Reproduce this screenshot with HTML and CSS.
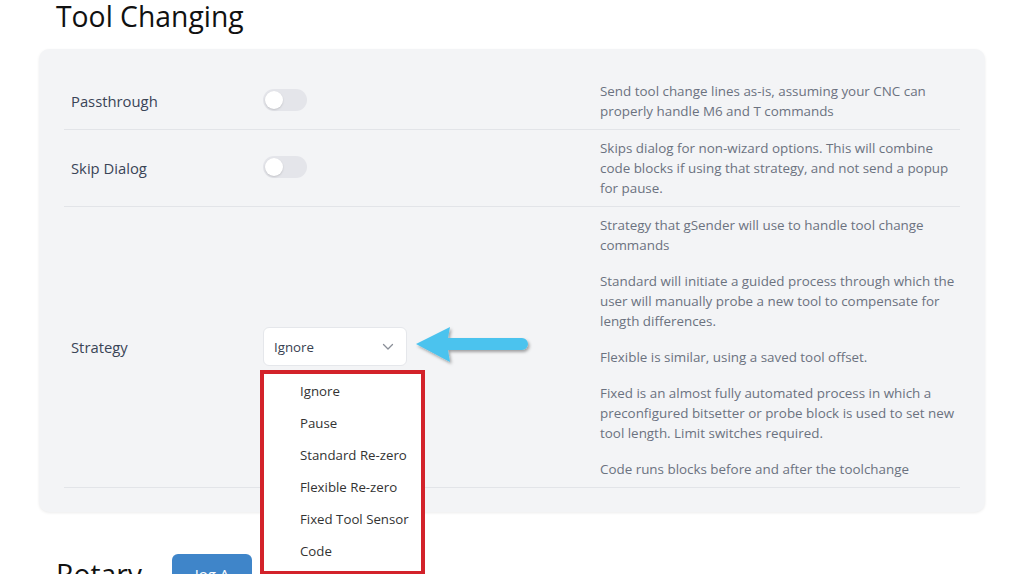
FILE: index.html
```html
<!DOCTYPE html>
<html>
<head>
<meta charset="utf-8">
<link rel="stylesheet" href="styles.css">
</head>
<body>
<main class="page">
  <h2 class="section-title top">Tool Changing</h2>
  <section class="card">
    <div class="row">
      <div class="label">Passthrough</div>
      <div class="control"><span class="toggle"><span class="knob"></span></span></div>
      <div class="desc"><p>Send tool change lines as-is, assuming your CNC can properly handle M6 and T commands</p></div>
    </div>
    <div class="row">
      <div class="label">Skip Dialog</div>
      <div class="control"><span class="toggle"><span class="knob"></span></span></div>
      <div class="desc"><p>Skips dialog for non-wizard options. This will combine code blocks if using that strategy, and not send a popup for pause.</p></div>
    </div>
    <div class="row">
      <div class="label">Strategy</div>
      <div class="control">
        <div class="select-wrap">
          <div class="select">
            <span>Ignore</span>
            <svg class="chev" width="12" height="8" viewBox="0 0 12 8"><path d="M1.5 1.5 L6 6 L10.5 1.5" fill="none" stroke="#8a8f98" stroke-width="1.3" stroke-linecap="round" stroke-linejoin="round"/></svg>
          </div>
          <svg class="arrow" width="124" height="48" viewBox="0 0 124 48">
            <defs><filter id="sh" x="-10%" y="-20%" width="130%" height="160%"><feDropShadow dx="1.5" dy="2" stdDeviation="1.5" flood-color="#000" flood-opacity="0.35"/></filter></defs>
            <path d="M2 22 L36 5 L34 16 L108 16 A6 6 0 0 1 108 28 L34 28 L36 40 Z" fill="#4cc3ee" filter="url(#sh)"/>
          </svg>
          <ul class="menu">
            <li>Ignore</li>
            <li>Pause</li>
            <li>Standard Re-zero</li>
            <li>Flexible Re-zero</li>
            <li>Fixed Tool Sensor</li>
            <li>Code</li>
          </ul>
        </div>
      </div>
      <div class="desc">
        <p>Strategy that gSender will use to handle tool change commands</p>
        <p>Standard will initiate a guided process through which the user will manually probe a new tool to compensate for length differences.</p>
        <p>Flexible is similar, using a saved tool offset.</p>
        <p>Fixed is an almost fully automated process in which a preconfigured bitsetter or probe block is used to set new tool length. Limit switches required.</p>
        <p>Code runs blocks before and after the toolchange</p>
      </div>
    </div>
  </section>
  <div class="next-head">
    <h2 class="section-title">Rotary</h2>
    <button class="btn">Jog A</button>
  </div>
</main>
</body>
</html>
```
FILE: styles.css
```css
* { box-sizing: border-box; }
html, body { margin: 0; padding: 0; background: #fff; overflow: hidden; }
body { font-family: "Open Sans", "Noto Sans", sans-serif; }
.page { padding: 0 36px 0 39px; }
.section-title {
  margin: 0 0 0 17px;
  font-weight: 400;
  font-size: 28.3px;
  line-height: 36px;
  color: #111;
}
.section-title.top { height: 49px; line-height: 32px; }
.card {
  background: #f3f4f6;
  border-radius: 10px;
  box-shadow: 0 1px 3px rgba(0,0,0,0.08);
  padding: 24px 25px 24px 25px;
}
.row {
  display: grid;
  grid-template-columns: 192px 337px 1fr;
  align-items: center;
  padding: 8px 0 8px 7px;
  border-bottom: 1px solid #e2e4e8;
}
.label { font-size: 14.8px; color: #3a4456; }
.control { display: flex; align-items: center; }
.desc { font-size: 13.4px; line-height: 20px; color: #6b7280; padding-right: 4px; }
.desc p { margin: 0 0 16px; }
.desc p:last-child { margin-bottom: 0; }
.toggle {
  display: block;
  position: relative;
  width: 44px; height: 22px;
  border-radius: 11px;
  background: #e4e5ea;
  margin-top: -2px;
}
.knob {
  position: absolute; left: 2px; top: 2px;
  width: 18px; height: 18px; border-radius: 50%;
  background: #fff;
  box-shadow: 0 1px 2px rgba(0,0,0,0.15);
}
.select-wrap { position: relative; width: 144px; margin-top: -1px; }
.select {
  display: flex; align-items: center; justify-content: space-between;
  height: 39px; padding: 0 12px 0 10px;
  background: #fff; border: 1px solid #e5e7eb; border-radius: 6px;
  font-size: 13.3px; color: #374151;
}
.chev { margin-top: 1px; }
.arrow { position: absolute; left: 151px; top: -5px; }
.menu {
  position: absolute; left: -3px; top: 43px;
  width: 165px; height: 205px;
  margin: 0; padding: 1px 0 0 36px;
  list-style: none;
  background: #fff;
  border: 4px solid #d3222a;
  font-size: 13.25px; color: #333;
}
.menu li { height: 32px; line-height: 32px; }
.next-head { display: flex; align-items: flex-start; margin-top: 42px; }
.next-head .section-title { flex: 0 0 116px; margin-top: 2px; }
.btn {
  width: 80px; height: 40px;
  background: #3f85c9; color: #fff; border: none; border-radius: 6px;
  font-family: inherit; font-size: 15px; padding-top: 0;
}
```
